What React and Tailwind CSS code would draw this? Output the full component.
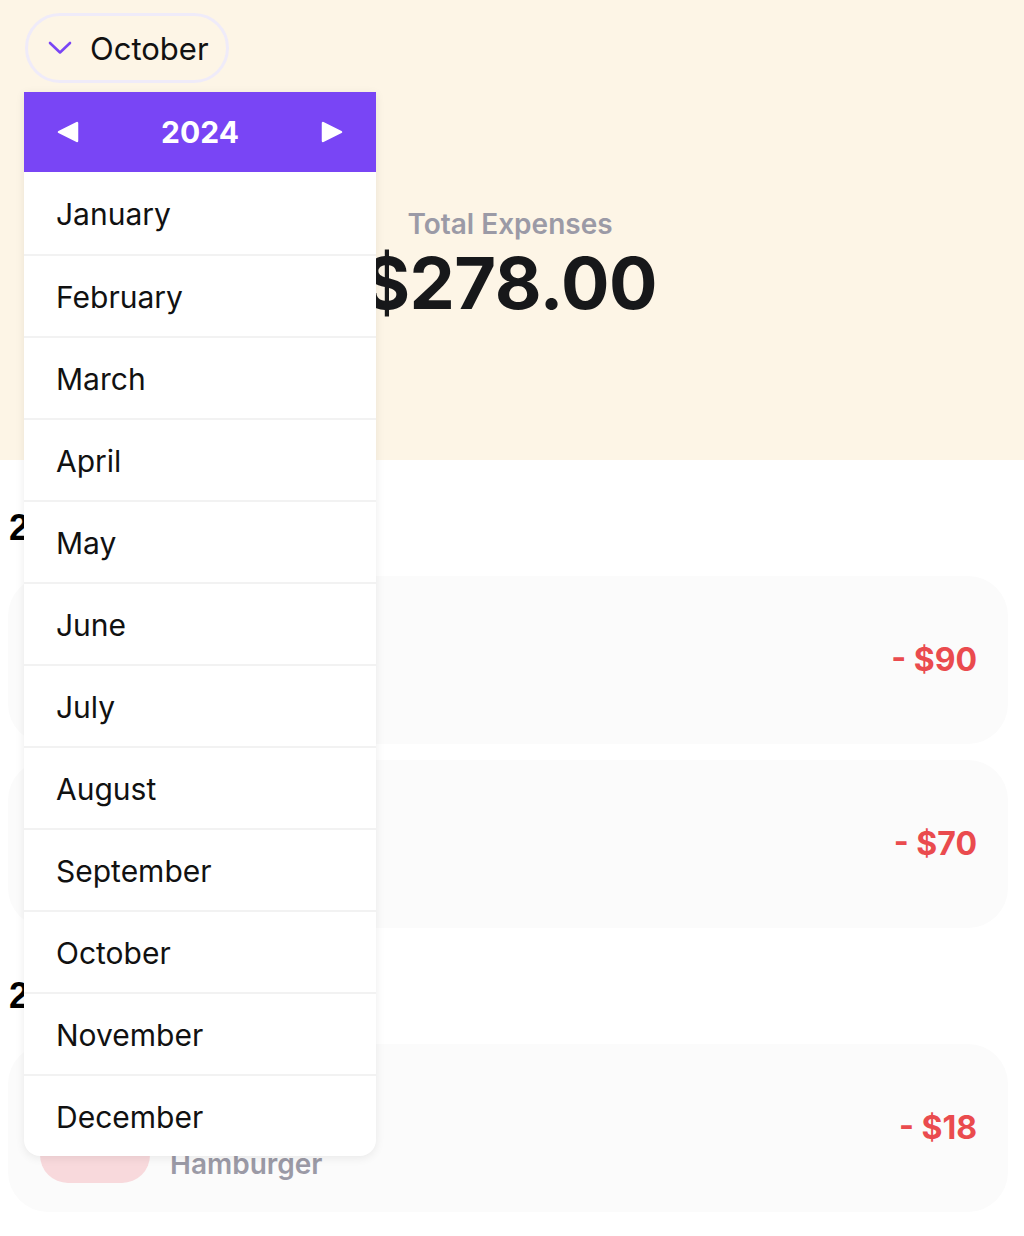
import React, { useState } from "react";

const MONTHS = [
  "January", "February", "March", "April", "May", "June",
  "July", "August", "September", "October", "November", "December",
];

const groups = [
  {
    date: "2024-10-12",
    items: [
      { title: "Groceries", note: "Supermarket", amount: 90, tint: "bg-[#dbe9f9]" },
      { title: "Transport", note: "Gas", amount: 70, tint: "bg-[#def3e2]" },
    ],
  },
  {
    date: "2024-10-05",
    items: [{ title: "Food", note: "Hamburger", amount: 18, tint: "bg-[#f8d9dc]" }],
  },
];

const Triangle = ({ dir }) => (
  <svg width="24" height="22" viewBox="0 0 24 22">
    <polygon
      points={dir === "left" ? "21,2 21,20 3,11" : "3,2 3,20 21,11"}
      fill="#fff"
      stroke="#fff"
      strokeWidth="2.5"
      strokeLinejoin="round"
    />
  </svg>
);

const App = () => {
  const [open, setOpen] = useState(true);
  const [year, setYear] = useState(2024);
  const [month, setMonth] = useState("October");

  return (
    <div className="min-h-[1236px] bg-white font-['Inter','Noto_Sans',sans-serif]">
      {/* Header */}
      <div className="bg-[#fdf5e6] h-[460px] pt-[13px] px-6">
        <div className="relative z-10 w-fit">
          <button
            onClick={() => setOpen(!open)}
            className="flex items-center gap-[18px] h-[70px] pl-[20px] pr-[17px] ml-px rounded-full border-[3px] border-[#efebf9]"
          >
            <svg width="24" height="14" viewBox="0 0 24 14" fill="none">
              <polyline points="2,2 12,11.5 22,2" stroke="#7a45f5" strokeWidth="2.6" strokeLinecap="round" strokeLinejoin="round" />
            </svg>
            <span className="text-[31px] leading-none text-[#111]">{month}</span>
          </button>

          {open && (
            <div className="absolute left-0 top-[79px] w-[352px] bg-white rounded-b-2xl shadow-[0_2px_10px_rgba(0,0,0,0.08)]">
              <div className="h-[80px] bg-[#7945f5] flex items-center justify-between px-[32px]">
                <button onClick={() => setYear(year - 1)}><Triangle dir="left" /></button>
                <span className="text-[30px] font-bold text-white">{year}</span>
                <button onClick={() => setYear(year + 1)}><Triangle dir="right" /></button>
              </div>
              {MONTHS.map((m, i) => (
                <div
                  key={m}
                  onClick={() => { setMonth(m); setOpen(false); }}
                  className={`h-[82px] flex items-center pl-[32px] pt-[3px] text-[30px] text-[#111] ${i > 0 ? "border-t-2 border-[#f2f2f2]" : ""}`}
                >
                  {m}
                </div>
              ))}
            </div>
          )}
        </div>

        <div className="flex flex-col items-center mt-[124px] pr-[4px]">
          <span className="text-[28px] leading-[34px] font-semibold text-[#9b9aa6]">Total Expenses</span>
          <span className="text-[72px] leading-[72px] font-bold text-[#17181a] mt-[6px] tracking-[-0.5px]">$278.00</span>
        </div>
      </div>

      {/* Expense list */}
      <div className="pl-2 pr-4 pb-6">
        {groups.map((g) => (
          <div key={g.date} className="mt-12">
            <h2 className="text-[36px] leading-[40px] font-bold text-black font-['Liberation_Sans',Arial,sans-serif] pl-px mb-[28px]">
              {g.date}
            </h2>
            <div className="flex flex-col gap-4">
              {g.items.map((it) => (
                <div key={it.title} className="h-[168px] rounded-[40px] bg-[#fbfbfb] flex items-center justify-between pl-8 pr-[31px]">
                  <div className="flex items-center gap-5">
                    <div className={`w-[110px] h-[110px] rounded-[28px] ${it.tint}`}></div>
                    <div className="flex flex-col gap-[22px] pt-[14px]">
                      <span className="text-[30px] font-bold text-[#17181a] leading-[36px]">{it.title}</span>
                      <span className="text-[28px] font-semibold text-[#9b9aa6] leading-[34px]">{it.note}</span>
                    </div>
                  </div>
                  <span className="text-[32px] font-bold text-[#ea4b4e]">- ${it.amount}</span>
                </div>
              ))}
            </div>
          </div>
        ))}
      </div>
    </div>
  );
};

export default App;
